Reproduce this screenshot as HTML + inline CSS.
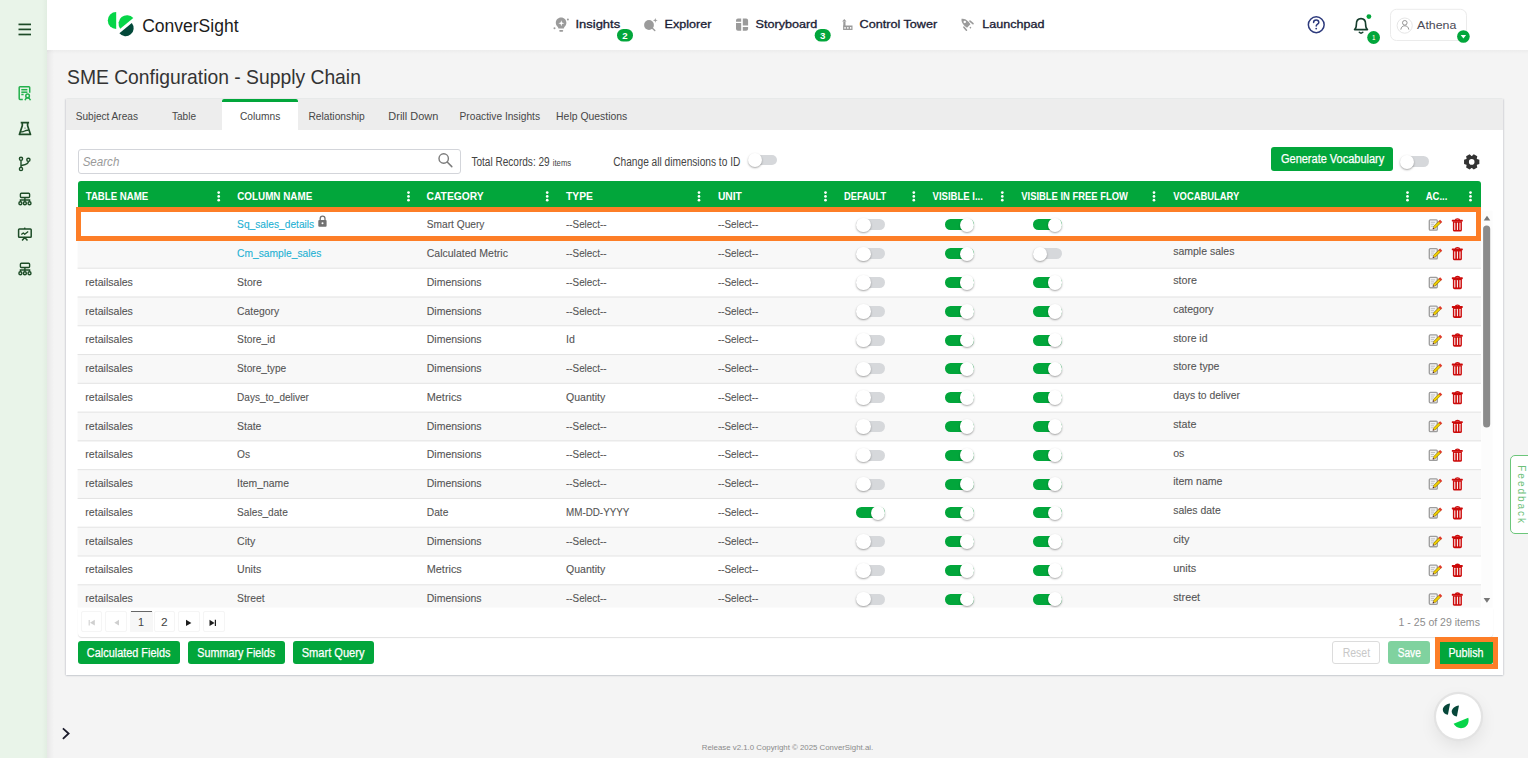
<!DOCTYPE html>
<html><head><meta charset="utf-8"><style>
html,body{margin:0;padding:0;}
body{width:1528px;height:758px;overflow:hidden;position:relative;background:#f4f4f4;font-family:"Liberation Sans",sans-serif;}
#L>div{position:absolute;}
#A>div{position:absolute;}
svg.ov{position:absolute;left:0;top:0;}
svg.ov text{font-family:"Liberation Sans",sans-serif;}
</style></head><body>
<div id="L">
<div style="left:0px;top:0px;width:46.6px;height:758px;background:linear-gradient(to right,#e9f4e9 0,#e9f4e9 42px,#e2eee2 46.6px)"></div>
<div style="left:46.6px;top:49.5px;width:7px;height:708.5px;background:linear-gradient(to right,rgba(0,0,0,0.05),rgba(0,0,0,0))"></div>
<div style="left:46.6px;top:0px;width:1481.4px;height:49.5px;background:#fff"></div>
<div style="left:46.6px;top:49.5px;width:1481.4px;height:4px;background:linear-gradient(to bottom,rgba(0,0,0,0.03),rgba(0,0,0,0))"></div>
<div style="left:66.3px;top:99px;width:1436.7px;height:576.3px;background:#fff;box-shadow:0 1px 1.5px rgba(30,40,70,0.16), 1px 0 1.5px rgba(30,40,70,0.10), -1px 0 1.5px rgba(30,40,70,0.10)"></div>
<div style="left:66.3px;top:99px;width:1436.7px;height:30.8px;background:#ededed"></div>
<div style="left:222px;top:99px;width:76px;height:30.8px;background:#fff"></div>
<div style="left:222px;top:99px;width:76px;height:3px;background:#02a63b;border-radius:2px 2px 0 0"></div>
<div style="left:78px;top:148.7px;width:383px;height:25.3px;background:#fff;border:1px solid #d3d5da;border-radius:3px;box-sizing:border-box"></div>
<div style="left:1271px;top:147px;width:122px;height:24px;background:#02a63b;border-radius:3px"></div>
<div style="left:77.6px;top:180.5px;width:1403.4px;height:30.1px;background:#02a63b;border-radius:3px 3px 0 0"></div>
<svg style="position:absolute;left:0;top:0" width="1528" height="758"><rect x="77.6" y="210.64" width="1403.4" height="28.78" fill="#ffffff"/><rect x="77.6" y="239.42" width="1403.4" height="28.78" fill="#f8f8f8"/><rect x="77.6" y="268.20" width="1403.4" height="28.78" fill="#ffffff"/><rect x="77.6" y="296.98" width="1403.4" height="28.78" fill="#f8f8f8"/><rect x="77.6" y="325.76" width="1403.4" height="28.78" fill="#ffffff"/><rect x="77.6" y="354.54" width="1403.4" height="28.78" fill="#f8f8f8"/><rect x="77.6" y="383.32" width="1403.4" height="28.78" fill="#ffffff"/><rect x="77.6" y="412.10" width="1403.4" height="28.78" fill="#f8f8f8"/><rect x="77.6" y="440.88" width="1403.4" height="28.78" fill="#ffffff"/><rect x="77.6" y="469.66" width="1403.4" height="28.78" fill="#f8f8f8"/><rect x="77.6" y="498.44" width="1403.4" height="28.78" fill="#ffffff"/><rect x="77.6" y="527.22" width="1403.4" height="28.78" fill="#f8f8f8"/><rect x="77.6" y="556.00" width="1403.4" height="28.78" fill="#ffffff"/><rect x="77.6" y="584.78" width="1403.4" height="22.82" fill="#f8f8f8"/><rect x="77.6" y="238.92" width="1403.4" height="1" fill="#e3e3e3"/><rect x="77.6" y="267.70" width="1403.4" height="1" fill="#e3e3e3"/><rect x="77.6" y="296.48" width="1403.4" height="1" fill="#e3e3e3"/><rect x="77.6" y="325.26" width="1403.4" height="1" fill="#e3e3e3"/><rect x="77.6" y="354.04" width="1403.4" height="1" fill="#e3e3e3"/><rect x="77.6" y="382.82" width="1403.4" height="1" fill="#e3e3e3"/><rect x="77.6" y="411.60" width="1403.4" height="1" fill="#e3e3e3"/><rect x="77.6" y="440.38" width="1403.4" height="1" fill="#e3e3e3"/><rect x="77.6" y="469.16" width="1403.4" height="1" fill="#e3e3e3"/><rect x="77.6" y="497.94" width="1403.4" height="1" fill="#e3e3e3"/><rect x="77.6" y="526.72" width="1403.4" height="1" fill="#e3e3e3"/><rect x="77.6" y="555.50" width="1403.4" height="1" fill="#e3e3e3"/><rect x="77.6" y="584.28" width="1403.4" height="1" fill="#e3e3e3"/></svg>
<div style="left:856.2px;top:219.49px;width:28.5px;height:11px;background:#d6d8db;border-radius:6px"></div>
<div style="left:856.2px;top:217.79000000000002px;width:14.4px;height:14.4px;background:#fff;border-radius:50%;box-shadow:0 1px 2px rgba(0,0,0,0.35)"></div>
<div style="left:945.2px;top:219.49px;width:28.5px;height:11px;background:#02a63b;border-radius:6px"></div>
<div style="left:959.7px;top:217.79000000000002px;width:14.4px;height:14.4px;background:#fff;border-radius:50%;box-shadow:0 1px 2px rgba(0,0,0,0.35)"></div>
<div style="left:1033px;top:219.49px;width:28.5px;height:11px;background:#02a63b;border-radius:6px"></div>
<div style="left:1047.5px;top:217.79000000000002px;width:14.4px;height:14.4px;background:#fff;border-radius:50%;box-shadow:0 1px 2px rgba(0,0,0,0.35)"></div>
<div style="left:856.2px;top:248.26999999999998px;width:28.5px;height:11px;background:#d6d8db;border-radius:6px"></div>
<div style="left:856.2px;top:246.57px;width:14.4px;height:14.4px;background:#fff;border-radius:50%;box-shadow:0 1px 2px rgba(0,0,0,0.35)"></div>
<div style="left:945.2px;top:248.26999999999998px;width:28.5px;height:11px;background:#02a63b;border-radius:6px"></div>
<div style="left:959.7px;top:246.57px;width:14.4px;height:14.4px;background:#fff;border-radius:50%;box-shadow:0 1px 2px rgba(0,0,0,0.35)"></div>
<div style="left:1033px;top:248.26999999999998px;width:28.5px;height:11px;background:#d6d8db;border-radius:6px"></div>
<div style="left:1033px;top:246.57px;width:14.4px;height:14.4px;background:#fff;border-radius:50%;box-shadow:0 1px 2px rgba(0,0,0,0.35)"></div>
<div style="left:856.2px;top:277.04999999999995px;width:28.5px;height:11px;background:#d6d8db;border-radius:6px"></div>
<div style="left:856.2px;top:275.34999999999997px;width:14.4px;height:14.4px;background:#fff;border-radius:50%;box-shadow:0 1px 2px rgba(0,0,0,0.35)"></div>
<div style="left:945.2px;top:277.04999999999995px;width:28.5px;height:11px;background:#02a63b;border-radius:6px"></div>
<div style="left:959.7px;top:275.34999999999997px;width:14.4px;height:14.4px;background:#fff;border-radius:50%;box-shadow:0 1px 2px rgba(0,0,0,0.35)"></div>
<div style="left:1033px;top:277.04999999999995px;width:28.5px;height:11px;background:#02a63b;border-radius:6px"></div>
<div style="left:1047.5px;top:275.34999999999997px;width:14.4px;height:14.4px;background:#fff;border-radius:50%;box-shadow:0 1px 2px rgba(0,0,0,0.35)"></div>
<div style="left:856.2px;top:305.83px;width:28.5px;height:11px;background:#d6d8db;border-radius:6px"></div>
<div style="left:856.2px;top:304.13px;width:14.4px;height:14.4px;background:#fff;border-radius:50%;box-shadow:0 1px 2px rgba(0,0,0,0.35)"></div>
<div style="left:945.2px;top:305.83px;width:28.5px;height:11px;background:#02a63b;border-radius:6px"></div>
<div style="left:959.7px;top:304.13px;width:14.4px;height:14.4px;background:#fff;border-radius:50%;box-shadow:0 1px 2px rgba(0,0,0,0.35)"></div>
<div style="left:1033px;top:305.83px;width:28.5px;height:11px;background:#02a63b;border-radius:6px"></div>
<div style="left:1047.5px;top:304.13px;width:14.4px;height:14.4px;background:#fff;border-radius:50%;box-shadow:0 1px 2px rgba(0,0,0,0.35)"></div>
<div style="left:856.2px;top:334.61px;width:28.5px;height:11px;background:#d6d8db;border-radius:6px"></div>
<div style="left:856.2px;top:332.91px;width:14.4px;height:14.4px;background:#fff;border-radius:50%;box-shadow:0 1px 2px rgba(0,0,0,0.35)"></div>
<div style="left:945.2px;top:334.61px;width:28.5px;height:11px;background:#02a63b;border-radius:6px"></div>
<div style="left:959.7px;top:332.91px;width:14.4px;height:14.4px;background:#fff;border-radius:50%;box-shadow:0 1px 2px rgba(0,0,0,0.35)"></div>
<div style="left:1033px;top:334.61px;width:28.5px;height:11px;background:#02a63b;border-radius:6px"></div>
<div style="left:1047.5px;top:332.91px;width:14.4px;height:14.4px;background:#fff;border-radius:50%;box-shadow:0 1px 2px rgba(0,0,0,0.35)"></div>
<div style="left:856.2px;top:363.39px;width:28.5px;height:11px;background:#d6d8db;border-radius:6px"></div>
<div style="left:856.2px;top:361.69px;width:14.4px;height:14.4px;background:#fff;border-radius:50%;box-shadow:0 1px 2px rgba(0,0,0,0.35)"></div>
<div style="left:945.2px;top:363.39px;width:28.5px;height:11px;background:#02a63b;border-radius:6px"></div>
<div style="left:959.7px;top:361.69px;width:14.4px;height:14.4px;background:#fff;border-radius:50%;box-shadow:0 1px 2px rgba(0,0,0,0.35)"></div>
<div style="left:1033px;top:363.39px;width:28.5px;height:11px;background:#02a63b;border-radius:6px"></div>
<div style="left:1047.5px;top:361.69px;width:14.4px;height:14.4px;background:#fff;border-radius:50%;box-shadow:0 1px 2px rgba(0,0,0,0.35)"></div>
<div style="left:856.2px;top:392.16999999999996px;width:28.5px;height:11px;background:#d6d8db;border-radius:6px"></div>
<div style="left:856.2px;top:390.46999999999997px;width:14.4px;height:14.4px;background:#fff;border-radius:50%;box-shadow:0 1px 2px rgba(0,0,0,0.35)"></div>
<div style="left:945.2px;top:392.16999999999996px;width:28.5px;height:11px;background:#02a63b;border-radius:6px"></div>
<div style="left:959.7px;top:390.46999999999997px;width:14.4px;height:14.4px;background:#fff;border-radius:50%;box-shadow:0 1px 2px rgba(0,0,0,0.35)"></div>
<div style="left:1033px;top:392.16999999999996px;width:28.5px;height:11px;background:#02a63b;border-radius:6px"></div>
<div style="left:1047.5px;top:390.46999999999997px;width:14.4px;height:14.4px;background:#fff;border-radius:50%;box-shadow:0 1px 2px rgba(0,0,0,0.35)"></div>
<div style="left:856.2px;top:420.95px;width:28.5px;height:11px;background:#d6d8db;border-radius:6px"></div>
<div style="left:856.2px;top:419.25px;width:14.4px;height:14.4px;background:#fff;border-radius:50%;box-shadow:0 1px 2px rgba(0,0,0,0.35)"></div>
<div style="left:945.2px;top:420.95px;width:28.5px;height:11px;background:#02a63b;border-radius:6px"></div>
<div style="left:959.7px;top:419.25px;width:14.4px;height:14.4px;background:#fff;border-radius:50%;box-shadow:0 1px 2px rgba(0,0,0,0.35)"></div>
<div style="left:1033px;top:420.95px;width:28.5px;height:11px;background:#02a63b;border-radius:6px"></div>
<div style="left:1047.5px;top:419.25px;width:14.4px;height:14.4px;background:#fff;border-radius:50%;box-shadow:0 1px 2px rgba(0,0,0,0.35)"></div>
<div style="left:856.2px;top:449.73px;width:28.5px;height:11px;background:#d6d8db;border-radius:6px"></div>
<div style="left:856.2px;top:448.03000000000003px;width:14.4px;height:14.4px;background:#fff;border-radius:50%;box-shadow:0 1px 2px rgba(0,0,0,0.35)"></div>
<div style="left:945.2px;top:449.73px;width:28.5px;height:11px;background:#02a63b;border-radius:6px"></div>
<div style="left:959.7px;top:448.03000000000003px;width:14.4px;height:14.4px;background:#fff;border-radius:50%;box-shadow:0 1px 2px rgba(0,0,0,0.35)"></div>
<div style="left:1033px;top:449.73px;width:28.5px;height:11px;background:#02a63b;border-radius:6px"></div>
<div style="left:1047.5px;top:448.03000000000003px;width:14.4px;height:14.4px;background:#fff;border-radius:50%;box-shadow:0 1px 2px rgba(0,0,0,0.35)"></div>
<div style="left:856.2px;top:478.51px;width:28.5px;height:11px;background:#d6d8db;border-radius:6px"></div>
<div style="left:856.2px;top:476.81px;width:14.4px;height:14.4px;background:#fff;border-radius:50%;box-shadow:0 1px 2px rgba(0,0,0,0.35)"></div>
<div style="left:945.2px;top:478.51px;width:28.5px;height:11px;background:#02a63b;border-radius:6px"></div>
<div style="left:959.7px;top:476.81px;width:14.4px;height:14.4px;background:#fff;border-radius:50%;box-shadow:0 1px 2px rgba(0,0,0,0.35)"></div>
<div style="left:1033px;top:478.51px;width:28.5px;height:11px;background:#02a63b;border-radius:6px"></div>
<div style="left:1047.5px;top:476.81px;width:14.4px;height:14.4px;background:#fff;border-radius:50%;box-shadow:0 1px 2px rgba(0,0,0,0.35)"></div>
<div style="left:856.2px;top:507.28999999999996px;width:28.5px;height:11px;background:#02a63b;border-radius:6px"></div>
<div style="left:870.7px;top:505.59px;width:14.4px;height:14.4px;background:#fff;border-radius:50%;box-shadow:0 1px 2px rgba(0,0,0,0.35)"></div>
<div style="left:945.2px;top:507.28999999999996px;width:28.5px;height:11px;background:#02a63b;border-radius:6px"></div>
<div style="left:959.7px;top:505.59px;width:14.4px;height:14.4px;background:#fff;border-radius:50%;box-shadow:0 1px 2px rgba(0,0,0,0.35)"></div>
<div style="left:1033px;top:507.28999999999996px;width:28.5px;height:11px;background:#02a63b;border-radius:6px"></div>
<div style="left:1047.5px;top:505.59px;width:14.4px;height:14.4px;background:#fff;border-radius:50%;box-shadow:0 1px 2px rgba(0,0,0,0.35)"></div>
<div style="left:856.2px;top:536.07px;width:28.5px;height:11px;background:#d6d8db;border-radius:6px"></div>
<div style="left:856.2px;top:534.37px;width:14.4px;height:14.4px;background:#fff;border-radius:50%;box-shadow:0 1px 2px rgba(0,0,0,0.35)"></div>
<div style="left:945.2px;top:536.07px;width:28.5px;height:11px;background:#02a63b;border-radius:6px"></div>
<div style="left:959.7px;top:534.37px;width:14.4px;height:14.4px;background:#fff;border-radius:50%;box-shadow:0 1px 2px rgba(0,0,0,0.35)"></div>
<div style="left:1033px;top:536.07px;width:28.5px;height:11px;background:#02a63b;border-radius:6px"></div>
<div style="left:1047.5px;top:534.37px;width:14.4px;height:14.4px;background:#fff;border-radius:50%;box-shadow:0 1px 2px rgba(0,0,0,0.35)"></div>
<div style="left:856.2px;top:564.85px;width:28.5px;height:11px;background:#d6d8db;border-radius:6px"></div>
<div style="left:856.2px;top:563.15px;width:14.4px;height:14.4px;background:#fff;border-radius:50%;box-shadow:0 1px 2px rgba(0,0,0,0.35)"></div>
<div style="left:945.2px;top:564.85px;width:28.5px;height:11px;background:#02a63b;border-radius:6px"></div>
<div style="left:959.7px;top:563.15px;width:14.4px;height:14.4px;background:#fff;border-radius:50%;box-shadow:0 1px 2px rgba(0,0,0,0.35)"></div>
<div style="left:1033px;top:564.85px;width:28.5px;height:11px;background:#02a63b;border-radius:6px"></div>
<div style="left:1047.5px;top:563.15px;width:14.4px;height:14.4px;background:#fff;border-radius:50%;box-shadow:0 1px 2px rgba(0,0,0,0.35)"></div>
<div style="left:856.2px;top:593.63px;width:28.5px;height:11px;background:#d6d8db;border-radius:6px"></div>
<div style="left:856.2px;top:591.93px;width:14.4px;height:14.4px;background:#fff;border-radius:50%;box-shadow:0 1px 2px rgba(0,0,0,0.35)"></div>
<div style="left:945.2px;top:593.63px;width:28.5px;height:11px;background:#02a63b;border-radius:6px"></div>
<div style="left:959.7px;top:591.93px;width:14.4px;height:14.4px;background:#fff;border-radius:50%;box-shadow:0 1px 2px rgba(0,0,0,0.35)"></div>
<div style="left:1033px;top:593.63px;width:28.5px;height:11px;background:#02a63b;border-radius:6px"></div>
<div style="left:1047.5px;top:591.93px;width:14.4px;height:14.4px;background:#fff;border-radius:50%;box-shadow:0 1px 2px rgba(0,0,0,0.35)"></div>
<div style="left:77.6px;top:607.5px;width:1415px;height:29.2px;background:#fff;border-radius:0 0 4px 4px;box-shadow:0 1px 1px rgba(0,0,0,0.12)"></div>
<div style="left:77.6px;top:640.6px;width:102.4px;height:23.8px;background:#02a63b;border-radius:3px"></div>
<div style="left:188px;top:640.6px;width:96.69999999999999px;height:23.8px;background:#02a63b;border-radius:3px"></div>
<div style="left:293px;top:640.6px;width:81px;height:23.8px;background:#02a63b;border-radius:3px"></div>
<div style="left:1332.4px;top:640.6px;width:47.3px;height:23.6px;border:1px solid #dcdcdc;border-radius:3px;box-sizing:border-box;background:#fff"></div>
<div style="left:1388.2px;top:640.6px;width:42.2px;height:23.6px;background:#80d29f;border-radius:3px"></div>
<div style="left:1440px;top:642px;width:53px;height:21.8px;background:#02a63b;border-radius:0 0 2px 0"></div>
<div style="left:749.4px;top:154.8px;width:28px;height:10.4px;background:#d6d8db;border-radius:6px"></div>
<div style="left:748.4px;top:153px;width:14px;height:14px;background:#fff;border-radius:50%;box-shadow:0 1px 2px rgba(0,0,0,0.35)"></div>
<div style="left:1401.4px;top:156.3px;width:28px;height:10.4px;background:#d6d8db;border-radius:6px"></div>
<div style="left:1400.4px;top:154.5px;width:14px;height:14px;background:#fff;border-radius:50%;box-shadow:0 1px 2px rgba(0,0,0,0.35)"></div>
<div style="left:81.4px;top:611.4px;width:21.099999999999994px;height:21.1px;border:1px solid #f5f5f5;box-sizing:border-box;border-radius:2px"></div>
<div style="left:105.3px;top:611.4px;width:21.299999999999997px;height:21.1px;border:1px solid #f5f5f5;box-sizing:border-box;border-radius:2px"></div>
<div style="left:130px;top:611.4px;width:22.599999999999994px;height:21.1px;border:1px solid #f5f5f5;box-sizing:border-box;border-radius:2px"></div>
<div style="left:153.6px;top:611.4px;width:21.599999999999994px;height:21.1px;border:1px solid #f5f5f5;box-sizing:border-box;border-radius:2px"></div>
<div style="left:178.1px;top:611.4px;width:22.099999999999994px;height:21.1px;border:1px solid #f5f5f5;box-sizing:border-box;border-radius:2px"></div>
<div style="left:202.6px;top:611.4px;width:22.099999999999994px;height:21.1px;border:1px solid #f5f5f5;box-sizing:border-box;border-radius:2px"></div>
<div style="left:130px;top:611.4px;width:22.6px;height:21.1px;background:#f7f7f7"></div>
<div style="left:131px;top:611px;width:21.3px;height:1.2px;background:#666"></div>
<div style="left:1510.4px;top:454.8px;width:30px;height:79.3px;border:1.5px solid #6cc67a;border-radius:5px;box-sizing:border-box;background:#fff"></div>
<div style="left:1435.5px;top:693.5px;width:45px;height:45px;border-radius:50%;background:#fff;box-shadow:0 0 0 2.2px #e3e3e3, 0 6px 18px rgba(0,0,0,0.09)"></div>
</div>
<svg class="ov" width="1528" height="758" viewBox="0 0 1528 758">
<circle cx="218.70" cy="192.6" r="1.35" fill="#fff"/>
<circle cx="218.70" cy="196.4" r="1.35" fill="#fff"/>
<circle cx="218.70" cy="200.2" r="1.35" fill="#fff"/>
<circle cx="408.50" cy="192.6" r="1.35" fill="#fff"/>
<circle cx="408.50" cy="196.4" r="1.35" fill="#fff"/>
<circle cx="408.50" cy="200.2" r="1.35" fill="#fff"/>
<circle cx="547.20" cy="192.6" r="1.35" fill="#fff"/>
<circle cx="547.20" cy="196.4" r="1.35" fill="#fff"/>
<circle cx="547.20" cy="200.2" r="1.35" fill="#fff"/>
<circle cx="699.00" cy="192.6" r="1.35" fill="#fff"/>
<circle cx="699.00" cy="196.4" r="1.35" fill="#fff"/>
<circle cx="699.00" cy="200.2" r="1.35" fill="#fff"/>
<circle cx="825.50" cy="192.6" r="1.35" fill="#fff"/>
<circle cx="825.50" cy="196.4" r="1.35" fill="#fff"/>
<circle cx="825.50" cy="200.2" r="1.35" fill="#fff"/>
<circle cx="913.80" cy="192.6" r="1.35" fill="#fff"/>
<circle cx="913.80" cy="196.4" r="1.35" fill="#fff"/>
<circle cx="913.80" cy="200.2" r="1.35" fill="#fff"/>
<circle cx="1002.30" cy="192.6" r="1.35" fill="#fff"/>
<circle cx="1002.30" cy="196.4" r="1.35" fill="#fff"/>
<circle cx="1002.30" cy="200.2" r="1.35" fill="#fff"/>
<circle cx="1154.00" cy="192.6" r="1.35" fill="#fff"/>
<circle cx="1154.00" cy="196.4" r="1.35" fill="#fff"/>
<circle cx="1154.00" cy="200.2" r="1.35" fill="#fff"/>
<circle cx="1407.50" cy="192.6" r="1.35" fill="#fff"/>
<circle cx="1407.50" cy="196.4" r="1.35" fill="#fff"/>
<circle cx="1407.50" cy="200.2" r="1.35" fill="#fff"/>
<circle cx="1470.50" cy="192.6" r="1.35" fill="#fff"/>
<circle cx="1470.50" cy="196.4" r="1.35" fill="#fff"/>
<circle cx="1470.50" cy="200.2" r="1.35" fill="#fff"/>
<g stroke="#1e4a28" stroke-width="1.7" stroke-linecap="butt"><line x1="18.5" y1="24.4" x2="31" y2="24.4"/><line x1="18.5" y1="29.4" x2="31" y2="29.4"/><line x1="18.5" y1="34.5" x2="31" y2="34.5"/></g>
<path d="M116.2,12 A8.45,8.45 0 0 0 116.2,28.9 Z" fill="#06d548"/>
<path d="M133.3,17.9 A8.5,8.5 0 0 0 120.2,28.7 Z" fill="#06d548"/>
<path d="M131.8,23 A8.05,8.05 0 0 1 119.4,33.3 Z" fill="#03493a"/>
<path d="M561.1,17.6 C564.2,17.6 566.4,19.9 566.4,22.8 C566.4,24.6 565.6,25.8 564.6,26.8 C564,27.4 563.8,28 563.8,28.6 L558.4,28.6 C558.4,28 558.2,27.4 557.6,26.8 C556.6,25.8 555.8,24.6 555.8,22.8 C555.8,19.9 558,17.6 561.1,17.6 Z" fill="#9b9b9b"/>
<path d="M561.3,20.3 L562,22.6 L564.3,23.3 L562,24 L561.3,26.3 L560.6,24 L558.3,23.3 L560.6,22.6 Z" fill="#fff"/>
<rect x="559.2" y="29.9" width="4" height="1.8" rx="0.9" fill="#9b9b9b"/><circle cx="567.9" cy="19.5" r="1" fill="#9b9b9b"/><circle cx="554.5" cy="28.2" r="1" fill="#9b9b9b"/>
<circle cx="649" cy="25" r="4.9" fill="#9b9b9b"/><line x1="652.4" y1="28.3" x2="654.8" y2="30.6" stroke="#9b9b9b" stroke-width="1.4" stroke-linecap="round"/>
<path d="M655.3,17.9 L655.9,19.7 L657.7,20.3 L655.9,20.9 L655.3,22.7 L654.7,20.9 L652.9,20.3 L654.7,19.7 Z" fill="#9b9b9b"/>
<path d="M738,18.4 H741.2 V21.8 H736 V20.4 A2,2 0 0 1 738,18.4 Z M736,23.1 H741.2 V30.8 H738 A2,2 0 0 1 736,28.8 Z M742.8,18.4 H746.1 A2,2 0 0 1 748.1,20.4 V25.6 H742.8 Z M742.8,27 H748.1 V28.8 A2,2 0 0 1 746.1,30.8 H742.8 Z" fill="#9b9b9b"/>
<path d="M844.3,19 L846.5,21.6 L842.1,21.6 Z" fill="#9b9b9b"/><rect x="843.3" y="21.5" width="2.2" height="5" fill="#9b9b9b"/>
<path d="M843.1,25.6 H852.5 V30.1 H843.1 Z M844.4,27 V28.7 H845.7 V27 Z M847.2,27 V28.7 H848.5 V27 Z M850,27 V28.7 H851.3 V27 Z" fill="#9b9b9b" fill-rule="evenodd"/>
<g transform="translate(965.9,23.1) rotate(-45)"><path d="M0,-6.2 C2.2,-4.6 3,-2 2.9,1.2 L2.4,4 L-2.4,4 L-2.9,1.2 C-3,-2 -2.2,-4.6 0,-6.2 Z M-1.25,-1.6 a1.25,1.25 0 1 0 2.5,0 a1.25,1.25 0 1 0 -2.5,0 Z" fill="#9b9b9b" fill-rule="evenodd"/><path d="M4.3,1.5 L4.6,5.4" stroke="#9b9b9b" stroke-width="1.6" stroke-linecap="round"/><path d="M-4.3,1.5 L-4.6,5.4" stroke="#9b9b9b" stroke-width="1.6" stroke-linecap="round"/><circle cx="0" cy="6.4" r="0.8" fill="#9b9b9b"/></g>
<rect x="617" y="29" width="16" height="12.6" rx="6.3" fill="#02a63b"/><rect x="814.7" y="29" width="16" height="12.6" rx="6.3" fill="#02a63b"/>
<circle cx="1316.25" cy="24.75" r="7.9" fill="none" stroke="#2d3a7c" stroke-width="1.5"/>
<path d="M1313.6,22.6 C1313.6,20.9 1314.8,20.1 1316.2,20.1 C1317.7,20.1 1318.8,21 1318.8,22.4 C1318.8,24 1316.2,24.1 1316.2,25.9" fill="none" stroke="#2d3a7c" stroke-width="1.5" stroke-linecap="round"/><circle cx="1316.2" cy="28.6" r="0.9" fill="#2d3a7c"/>
<path d="M1354.5,29.6 C1356,28.6 1356.4,26.5 1356.4,24 C1356.4,20.4 1358.5,18.6 1361,18.6 C1363.5,18.6 1365.6,20.4 1365.6,24 C1365.6,26.5 1366,28.6 1367.5,29.6 Z" fill="none" stroke="#163e2d" stroke-width="1.6" stroke-linejoin="round"/>
<path d="M1359.3,32.3 Q1361,34 1362.8,32.3" fill="none" stroke="#163e2d" stroke-width="1.5" stroke-linecap="round"/>
<circle cx="1368.9" cy="16.6" r="2.4" fill="#02a63b"/><circle cx="1373.6" cy="37.5" r="6.4" fill="#02a63b"/>
<rect x="1390.5" y="9.3" width="76" height="31.2" rx="6" fill="none" stroke="#ebebeb" stroke-width="1"/>
<circle cx="1404.7" cy="25.6" r="7.6" fill="#fff" stroke="#e2e2e2" stroke-width="0.9"/>
<circle cx="1404.8" cy="22.8" r="2.3" fill="none" stroke="#8a8a8a" stroke-width="0.9"/><path d="M1400.8,29.6 C1401.2,26.9 1402.8,25.8 1404.8,25.8 C1406.8,25.8 1408.4,26.9 1408.8,29.6" fill="none" stroke="#8a8a8a" stroke-width="0.9"/>
<circle cx="1463.4" cy="36.5" r="6.3" fill="#02a63b"/><path d="M1460.7,34.9 H1466.1 L1463.4,38.4 Z" fill="#fff"/>
<g fill="none" stroke="#22b04b" stroke-width="1.5"><path d="M22.8,99.4 H20 A0.8,0.8 0 0 1 19.2,98.6 V87.6 A0.8,0.8 0 0 1 20,86.8 H28.9 A0.8,0.8 0 0 1 29.7,87.6 V92.8"/><line x1="21.3" y1="89.7" x2="27.4" y2="89.7"/><line x1="21.3" y1="92.2" x2="27.4" y2="92.2"/><line x1="21.3" y1="94.5" x2="23.6" y2="94.5"/><circle cx="27.6" cy="95.9" r="1.8"/><path d="M25,100.2 C25.5,98.6 26.4,97.8 27.6,97.8 C28.8,97.8 29.8,98.6 30.5,100.2"/></g>
<g fill="none" stroke="#1d4c27" stroke-width="1.5" stroke-linejoin="round"><path d="M20.7,122.6 H29.1 M22.3,122.6 V125.8 L19.4,134.4 H30.5 L27.6,125.8 V122.6" stroke-width="1.7"/><path d="M20.4,131.5 C22.5,132.8 24.2,131.2 25.5,130.6 C26.8,130 27.8,130.4 28.6,130.2" stroke-width="1.3"/></g><circle cx="25" cy="128" r="0.6" fill="#1d4c27"/>
<g fill="none" stroke="#1d4c27" stroke-width="1.4"><circle cx="21" cy="158.8" r="1.6"/><circle cx="21" cy="169" r="1.6"/><circle cx="28.4" cy="159.8" r="1.6"/><line x1="21" y1="160.4" x2="21" y2="167.4"/><path d="M28.4,161.4 C28.4,164.2 25,164.6 21,165.6"/></g>
<g fill="none" stroke="#1d4c27" stroke-width="1.4"><rect x="20.4" y="193.3" width="9.2" height="4.2" rx="1"/><line x1="24.9" y1="197.5" x2="24.9" y2="201.5"/><path d="M20.4,201.6 V200 H29.6 V201.6"/><circle cx="20.4" cy="203.3" r="1.5"/><circle cx="24.9" cy="203.3" r="1.5"/><circle cx="29.5" cy="203.3" r="1.5"/></g>
<g fill="none" stroke="#1d4c27" stroke-width="1.4"><rect x="20.4" y="263.3" width="9.2" height="4.2" rx="1"/><line x1="24.9" y1="267.5" x2="24.9" y2="271.5"/><path d="M20.4,271.6 V270 H29.6 V271.6"/><circle cx="20.4" cy="273.3" r="1.5"/><circle cx="24.9" cy="273.3" r="1.5"/><circle cx="29.5" cy="273.3" r="1.5"/></g>
<g fill="none" stroke="#1d4c27" stroke-width="1.5" stroke-linejoin="round"><rect x="18.6" y="229" width="12.6" height="8.3" rx="0.8"/><line x1="24.7" y1="227.6" x2="24.7" y2="229"/><path d="M22.1,240.6 L24.7,237.6 L27.5,240.6"/><path d="M21.3,234.6 L23.3,232.9 L24.7,234.3 L28.2,231.4" stroke-width="1.3"/></g>
<path d="M62.9,728.3 L68.6,733.5 L62.9,738.8" fill="none" stroke="#1b1b2b" stroke-width="1.8"/>
<circle cx="443.7" cy="158.5" r="4.7" fill="none" stroke="#7b7b7b" stroke-width="1.4"/><line x1="447.2" y1="162" x2="451.8" y2="166.6" stroke="#7b7b7b" stroke-width="1.5" stroke-linecap="round"/>
<path d="M1477.01,159.10 L1479.33,159.87 L1479.33,163.93 L1477.01,164.70 L1476.78,165.10 L1477.28,167.50 L1473.76,169.53 L1471.93,167.90 L1471.47,167.90 L1469.64,169.53 L1466.12,167.50 L1466.62,165.10 L1466.39,164.70 L1464.07,163.93 L1464.07,159.87 L1466.39,159.10 L1466.62,158.70 L1466.12,156.30 L1469.64,154.27 L1471.47,155.90 L1471.93,155.90 L1473.76,154.27 L1477.28,156.30 L1476.78,158.70 Z M1474.5,161.9 A2.8,2.8 0 1 0 1468.9,161.9 A2.8,2.8 0 1 0 1474.5,161.9 Z" fill="#333" fill-rule="evenodd"/>
<path d="M320.2,220 V218.6 A2.4,2.4 0 0 1 325,218.6 V220" fill="none" stroke="#727272" stroke-width="1.3"/><rect x="318.3" y="219.9" width="8.3" height="6.9" rx="1" fill="#727272"/><circle cx="322.5" cy="223.3" r="1" fill="#fff"/>
<rect x="1481.5" y="210.6" width="11" height="397" fill="#fcfcfc"/>
<path d="M1483.7,220.5 L1487,215.8 L1490.3,220.5 Z" fill="#777"/><rect x="1483.1" y="225.5" width="7.1" height="202" rx="3.55" fill="#8b8b8b"/><path d="M1483.6,597.9 L1490.2,597.9 L1486.9,602.8 Z" fill="#777"/>
<g transform="translate(0,-0.01)"><rect x="1429.3" y="219.8" width="8" height="10.4" rx="1" fill="#f2f2f2" stroke="#9d9d9d" stroke-width="1.3"/><line x1="1430.8" y1="222.3" x2="1435" y2="222.3" stroke="#b5b5b5" stroke-width="0.8"/><line x1="1430.8" y1="224.3" x2="1434" y2="224.3" stroke="#b5b5b5" stroke-width="0.8"/><line x1="1430.8" y1="226.3" x2="1433" y2="226.3" stroke="#b5b5b5" stroke-width="0.8"/><line x1="1434" y1="227.8" x2="1440.3" y2="221.6" stroke="#8a7a20" stroke-width="3"/><line x1="1434" y1="227.8" x2="1440.3" y2="221.6" stroke="#f2cf00" stroke-width="2"/><line x1="1439.6" y1="222.3" x2="1441.2" y2="220.8" stroke="#e03a2a" stroke-width="3"/><path d="M1432.6,229.3 L1433,227.2 L1434.7,228.9 Z" fill="#5a2a20"/><path d="M1455.4,220.3 C1455.5,218.4 1459.5,218.4 1459.6,220.3" fill="none" stroke="#cc0a0a" stroke-width="1.3"/><rect x="1451.8" y="219.7" width="11" height="1.9" rx="0.6" fill="#cc0a0a"/><path d="M1452.9,221.3 H1461.9 V230 A1.6,1.6 0 0 1 1460.3,231.6 H1454.5 A1.6,1.6 0 0 1 1452.9,230 Z" fill="#cc0a0a"/><rect x="1454.3" y="222.4" width="1" height="7.6" rx="0.5" fill="#fff"/><rect x="1456.9" y="222.4" width="1" height="7.6" rx="0.5" fill="#fff"/><rect x="1459.5" y="222.4" width="1" height="7.6" rx="0.5" fill="#fff"/></g>
<g transform="translate(0,28.77)"><rect x="1429.3" y="219.8" width="8" height="10.4" rx="1" fill="#f2f2f2" stroke="#9d9d9d" stroke-width="1.3"/><line x1="1430.8" y1="222.3" x2="1435" y2="222.3" stroke="#b5b5b5" stroke-width="0.8"/><line x1="1430.8" y1="224.3" x2="1434" y2="224.3" stroke="#b5b5b5" stroke-width="0.8"/><line x1="1430.8" y1="226.3" x2="1433" y2="226.3" stroke="#b5b5b5" stroke-width="0.8"/><line x1="1434" y1="227.8" x2="1440.3" y2="221.6" stroke="#8a7a20" stroke-width="3"/><line x1="1434" y1="227.8" x2="1440.3" y2="221.6" stroke="#f2cf00" stroke-width="2"/><line x1="1439.6" y1="222.3" x2="1441.2" y2="220.8" stroke="#e03a2a" stroke-width="3"/><path d="M1432.6,229.3 L1433,227.2 L1434.7,228.9 Z" fill="#5a2a20"/><path d="M1455.4,220.3 C1455.5,218.4 1459.5,218.4 1459.6,220.3" fill="none" stroke="#cc0a0a" stroke-width="1.3"/><rect x="1451.8" y="219.7" width="11" height="1.9" rx="0.6" fill="#cc0a0a"/><path d="M1452.9,221.3 H1461.9 V230 A1.6,1.6 0 0 1 1460.3,231.6 H1454.5 A1.6,1.6 0 0 1 1452.9,230 Z" fill="#cc0a0a"/><rect x="1454.3" y="222.4" width="1" height="7.6" rx="0.5" fill="#fff"/><rect x="1456.9" y="222.4" width="1" height="7.6" rx="0.5" fill="#fff"/><rect x="1459.5" y="222.4" width="1" height="7.6" rx="0.5" fill="#fff"/></g>
<g transform="translate(0,57.55)"><rect x="1429.3" y="219.8" width="8" height="10.4" rx="1" fill="#f2f2f2" stroke="#9d9d9d" stroke-width="1.3"/><line x1="1430.8" y1="222.3" x2="1435" y2="222.3" stroke="#b5b5b5" stroke-width="0.8"/><line x1="1430.8" y1="224.3" x2="1434" y2="224.3" stroke="#b5b5b5" stroke-width="0.8"/><line x1="1430.8" y1="226.3" x2="1433" y2="226.3" stroke="#b5b5b5" stroke-width="0.8"/><line x1="1434" y1="227.8" x2="1440.3" y2="221.6" stroke="#8a7a20" stroke-width="3"/><line x1="1434" y1="227.8" x2="1440.3" y2="221.6" stroke="#f2cf00" stroke-width="2"/><line x1="1439.6" y1="222.3" x2="1441.2" y2="220.8" stroke="#e03a2a" stroke-width="3"/><path d="M1432.6,229.3 L1433,227.2 L1434.7,228.9 Z" fill="#5a2a20"/><path d="M1455.4,220.3 C1455.5,218.4 1459.5,218.4 1459.6,220.3" fill="none" stroke="#cc0a0a" stroke-width="1.3"/><rect x="1451.8" y="219.7" width="11" height="1.9" rx="0.6" fill="#cc0a0a"/><path d="M1452.9,221.3 H1461.9 V230 A1.6,1.6 0 0 1 1460.3,231.6 H1454.5 A1.6,1.6 0 0 1 1452.9,230 Z" fill="#cc0a0a"/><rect x="1454.3" y="222.4" width="1" height="7.6" rx="0.5" fill="#fff"/><rect x="1456.9" y="222.4" width="1" height="7.6" rx="0.5" fill="#fff"/><rect x="1459.5" y="222.4" width="1" height="7.6" rx="0.5" fill="#fff"/></g>
<g transform="translate(0,86.33)"><rect x="1429.3" y="219.8" width="8" height="10.4" rx="1" fill="#f2f2f2" stroke="#9d9d9d" stroke-width="1.3"/><line x1="1430.8" y1="222.3" x2="1435" y2="222.3" stroke="#b5b5b5" stroke-width="0.8"/><line x1="1430.8" y1="224.3" x2="1434" y2="224.3" stroke="#b5b5b5" stroke-width="0.8"/><line x1="1430.8" y1="226.3" x2="1433" y2="226.3" stroke="#b5b5b5" stroke-width="0.8"/><line x1="1434" y1="227.8" x2="1440.3" y2="221.6" stroke="#8a7a20" stroke-width="3"/><line x1="1434" y1="227.8" x2="1440.3" y2="221.6" stroke="#f2cf00" stroke-width="2"/><line x1="1439.6" y1="222.3" x2="1441.2" y2="220.8" stroke="#e03a2a" stroke-width="3"/><path d="M1432.6,229.3 L1433,227.2 L1434.7,228.9 Z" fill="#5a2a20"/><path d="M1455.4,220.3 C1455.5,218.4 1459.5,218.4 1459.6,220.3" fill="none" stroke="#cc0a0a" stroke-width="1.3"/><rect x="1451.8" y="219.7" width="11" height="1.9" rx="0.6" fill="#cc0a0a"/><path d="M1452.9,221.3 H1461.9 V230 A1.6,1.6 0 0 1 1460.3,231.6 H1454.5 A1.6,1.6 0 0 1 1452.9,230 Z" fill="#cc0a0a"/><rect x="1454.3" y="222.4" width="1" height="7.6" rx="0.5" fill="#fff"/><rect x="1456.9" y="222.4" width="1" height="7.6" rx="0.5" fill="#fff"/><rect x="1459.5" y="222.4" width="1" height="7.6" rx="0.5" fill="#fff"/></g>
<g transform="translate(0,115.11)"><rect x="1429.3" y="219.8" width="8" height="10.4" rx="1" fill="#f2f2f2" stroke="#9d9d9d" stroke-width="1.3"/><line x1="1430.8" y1="222.3" x2="1435" y2="222.3" stroke="#b5b5b5" stroke-width="0.8"/><line x1="1430.8" y1="224.3" x2="1434" y2="224.3" stroke="#b5b5b5" stroke-width="0.8"/><line x1="1430.8" y1="226.3" x2="1433" y2="226.3" stroke="#b5b5b5" stroke-width="0.8"/><line x1="1434" y1="227.8" x2="1440.3" y2="221.6" stroke="#8a7a20" stroke-width="3"/><line x1="1434" y1="227.8" x2="1440.3" y2="221.6" stroke="#f2cf00" stroke-width="2"/><line x1="1439.6" y1="222.3" x2="1441.2" y2="220.8" stroke="#e03a2a" stroke-width="3"/><path d="M1432.6,229.3 L1433,227.2 L1434.7,228.9 Z" fill="#5a2a20"/><path d="M1455.4,220.3 C1455.5,218.4 1459.5,218.4 1459.6,220.3" fill="none" stroke="#cc0a0a" stroke-width="1.3"/><rect x="1451.8" y="219.7" width="11" height="1.9" rx="0.6" fill="#cc0a0a"/><path d="M1452.9,221.3 H1461.9 V230 A1.6,1.6 0 0 1 1460.3,231.6 H1454.5 A1.6,1.6 0 0 1 1452.9,230 Z" fill="#cc0a0a"/><rect x="1454.3" y="222.4" width="1" height="7.6" rx="0.5" fill="#fff"/><rect x="1456.9" y="222.4" width="1" height="7.6" rx="0.5" fill="#fff"/><rect x="1459.5" y="222.4" width="1" height="7.6" rx="0.5" fill="#fff"/></g>
<g transform="translate(0,143.89)"><rect x="1429.3" y="219.8" width="8" height="10.4" rx="1" fill="#f2f2f2" stroke="#9d9d9d" stroke-width="1.3"/><line x1="1430.8" y1="222.3" x2="1435" y2="222.3" stroke="#b5b5b5" stroke-width="0.8"/><line x1="1430.8" y1="224.3" x2="1434" y2="224.3" stroke="#b5b5b5" stroke-width="0.8"/><line x1="1430.8" y1="226.3" x2="1433" y2="226.3" stroke="#b5b5b5" stroke-width="0.8"/><line x1="1434" y1="227.8" x2="1440.3" y2="221.6" stroke="#8a7a20" stroke-width="3"/><line x1="1434" y1="227.8" x2="1440.3" y2="221.6" stroke="#f2cf00" stroke-width="2"/><line x1="1439.6" y1="222.3" x2="1441.2" y2="220.8" stroke="#e03a2a" stroke-width="3"/><path d="M1432.6,229.3 L1433,227.2 L1434.7,228.9 Z" fill="#5a2a20"/><path d="M1455.4,220.3 C1455.5,218.4 1459.5,218.4 1459.6,220.3" fill="none" stroke="#cc0a0a" stroke-width="1.3"/><rect x="1451.8" y="219.7" width="11" height="1.9" rx="0.6" fill="#cc0a0a"/><path d="M1452.9,221.3 H1461.9 V230 A1.6,1.6 0 0 1 1460.3,231.6 H1454.5 A1.6,1.6 0 0 1 1452.9,230 Z" fill="#cc0a0a"/><rect x="1454.3" y="222.4" width="1" height="7.6" rx="0.5" fill="#fff"/><rect x="1456.9" y="222.4" width="1" height="7.6" rx="0.5" fill="#fff"/><rect x="1459.5" y="222.4" width="1" height="7.6" rx="0.5" fill="#fff"/></g>
<g transform="translate(0,172.67)"><rect x="1429.3" y="219.8" width="8" height="10.4" rx="1" fill="#f2f2f2" stroke="#9d9d9d" stroke-width="1.3"/><line x1="1430.8" y1="222.3" x2="1435" y2="222.3" stroke="#b5b5b5" stroke-width="0.8"/><line x1="1430.8" y1="224.3" x2="1434" y2="224.3" stroke="#b5b5b5" stroke-width="0.8"/><line x1="1430.8" y1="226.3" x2="1433" y2="226.3" stroke="#b5b5b5" stroke-width="0.8"/><line x1="1434" y1="227.8" x2="1440.3" y2="221.6" stroke="#8a7a20" stroke-width="3"/><line x1="1434" y1="227.8" x2="1440.3" y2="221.6" stroke="#f2cf00" stroke-width="2"/><line x1="1439.6" y1="222.3" x2="1441.2" y2="220.8" stroke="#e03a2a" stroke-width="3"/><path d="M1432.6,229.3 L1433,227.2 L1434.7,228.9 Z" fill="#5a2a20"/><path d="M1455.4,220.3 C1455.5,218.4 1459.5,218.4 1459.6,220.3" fill="none" stroke="#cc0a0a" stroke-width="1.3"/><rect x="1451.8" y="219.7" width="11" height="1.9" rx="0.6" fill="#cc0a0a"/><path d="M1452.9,221.3 H1461.9 V230 A1.6,1.6 0 0 1 1460.3,231.6 H1454.5 A1.6,1.6 0 0 1 1452.9,230 Z" fill="#cc0a0a"/><rect x="1454.3" y="222.4" width="1" height="7.6" rx="0.5" fill="#fff"/><rect x="1456.9" y="222.4" width="1" height="7.6" rx="0.5" fill="#fff"/><rect x="1459.5" y="222.4" width="1" height="7.6" rx="0.5" fill="#fff"/></g>
<g transform="translate(0,201.45)"><rect x="1429.3" y="219.8" width="8" height="10.4" rx="1" fill="#f2f2f2" stroke="#9d9d9d" stroke-width="1.3"/><line x1="1430.8" y1="222.3" x2="1435" y2="222.3" stroke="#b5b5b5" stroke-width="0.8"/><line x1="1430.8" y1="224.3" x2="1434" y2="224.3" stroke="#b5b5b5" stroke-width="0.8"/><line x1="1430.8" y1="226.3" x2="1433" y2="226.3" stroke="#b5b5b5" stroke-width="0.8"/><line x1="1434" y1="227.8" x2="1440.3" y2="221.6" stroke="#8a7a20" stroke-width="3"/><line x1="1434" y1="227.8" x2="1440.3" y2="221.6" stroke="#f2cf00" stroke-width="2"/><line x1="1439.6" y1="222.3" x2="1441.2" y2="220.8" stroke="#e03a2a" stroke-width="3"/><path d="M1432.6,229.3 L1433,227.2 L1434.7,228.9 Z" fill="#5a2a20"/><path d="M1455.4,220.3 C1455.5,218.4 1459.5,218.4 1459.6,220.3" fill="none" stroke="#cc0a0a" stroke-width="1.3"/><rect x="1451.8" y="219.7" width="11" height="1.9" rx="0.6" fill="#cc0a0a"/><path d="M1452.9,221.3 H1461.9 V230 A1.6,1.6 0 0 1 1460.3,231.6 H1454.5 A1.6,1.6 0 0 1 1452.9,230 Z" fill="#cc0a0a"/><rect x="1454.3" y="222.4" width="1" height="7.6" rx="0.5" fill="#fff"/><rect x="1456.9" y="222.4" width="1" height="7.6" rx="0.5" fill="#fff"/><rect x="1459.5" y="222.4" width="1" height="7.6" rx="0.5" fill="#fff"/></g>
<g transform="translate(0,230.23)"><rect x="1429.3" y="219.8" width="8" height="10.4" rx="1" fill="#f2f2f2" stroke="#9d9d9d" stroke-width="1.3"/><line x1="1430.8" y1="222.3" x2="1435" y2="222.3" stroke="#b5b5b5" stroke-width="0.8"/><line x1="1430.8" y1="224.3" x2="1434" y2="224.3" stroke="#b5b5b5" stroke-width="0.8"/><line x1="1430.8" y1="226.3" x2="1433" y2="226.3" stroke="#b5b5b5" stroke-width="0.8"/><line x1="1434" y1="227.8" x2="1440.3" y2="221.6" stroke="#8a7a20" stroke-width="3"/><line x1="1434" y1="227.8" x2="1440.3" y2="221.6" stroke="#f2cf00" stroke-width="2"/><line x1="1439.6" y1="222.3" x2="1441.2" y2="220.8" stroke="#e03a2a" stroke-width="3"/><path d="M1432.6,229.3 L1433,227.2 L1434.7,228.9 Z" fill="#5a2a20"/><path d="M1455.4,220.3 C1455.5,218.4 1459.5,218.4 1459.6,220.3" fill="none" stroke="#cc0a0a" stroke-width="1.3"/><rect x="1451.8" y="219.7" width="11" height="1.9" rx="0.6" fill="#cc0a0a"/><path d="M1452.9,221.3 H1461.9 V230 A1.6,1.6 0 0 1 1460.3,231.6 H1454.5 A1.6,1.6 0 0 1 1452.9,230 Z" fill="#cc0a0a"/><rect x="1454.3" y="222.4" width="1" height="7.6" rx="0.5" fill="#fff"/><rect x="1456.9" y="222.4" width="1" height="7.6" rx="0.5" fill="#fff"/><rect x="1459.5" y="222.4" width="1" height="7.6" rx="0.5" fill="#fff"/></g>
<g transform="translate(0,259.01)"><rect x="1429.3" y="219.8" width="8" height="10.4" rx="1" fill="#f2f2f2" stroke="#9d9d9d" stroke-width="1.3"/><line x1="1430.8" y1="222.3" x2="1435" y2="222.3" stroke="#b5b5b5" stroke-width="0.8"/><line x1="1430.8" y1="224.3" x2="1434" y2="224.3" stroke="#b5b5b5" stroke-width="0.8"/><line x1="1430.8" y1="226.3" x2="1433" y2="226.3" stroke="#b5b5b5" stroke-width="0.8"/><line x1="1434" y1="227.8" x2="1440.3" y2="221.6" stroke="#8a7a20" stroke-width="3"/><line x1="1434" y1="227.8" x2="1440.3" y2="221.6" stroke="#f2cf00" stroke-width="2"/><line x1="1439.6" y1="222.3" x2="1441.2" y2="220.8" stroke="#e03a2a" stroke-width="3"/><path d="M1432.6,229.3 L1433,227.2 L1434.7,228.9 Z" fill="#5a2a20"/><path d="M1455.4,220.3 C1455.5,218.4 1459.5,218.4 1459.6,220.3" fill="none" stroke="#cc0a0a" stroke-width="1.3"/><rect x="1451.8" y="219.7" width="11" height="1.9" rx="0.6" fill="#cc0a0a"/><path d="M1452.9,221.3 H1461.9 V230 A1.6,1.6 0 0 1 1460.3,231.6 H1454.5 A1.6,1.6 0 0 1 1452.9,230 Z" fill="#cc0a0a"/><rect x="1454.3" y="222.4" width="1" height="7.6" rx="0.5" fill="#fff"/><rect x="1456.9" y="222.4" width="1" height="7.6" rx="0.5" fill="#fff"/><rect x="1459.5" y="222.4" width="1" height="7.6" rx="0.5" fill="#fff"/></g>
<g transform="translate(0,287.79)"><rect x="1429.3" y="219.8" width="8" height="10.4" rx="1" fill="#f2f2f2" stroke="#9d9d9d" stroke-width="1.3"/><line x1="1430.8" y1="222.3" x2="1435" y2="222.3" stroke="#b5b5b5" stroke-width="0.8"/><line x1="1430.8" y1="224.3" x2="1434" y2="224.3" stroke="#b5b5b5" stroke-width="0.8"/><line x1="1430.8" y1="226.3" x2="1433" y2="226.3" stroke="#b5b5b5" stroke-width="0.8"/><line x1="1434" y1="227.8" x2="1440.3" y2="221.6" stroke="#8a7a20" stroke-width="3"/><line x1="1434" y1="227.8" x2="1440.3" y2="221.6" stroke="#f2cf00" stroke-width="2"/><line x1="1439.6" y1="222.3" x2="1441.2" y2="220.8" stroke="#e03a2a" stroke-width="3"/><path d="M1432.6,229.3 L1433,227.2 L1434.7,228.9 Z" fill="#5a2a20"/><path d="M1455.4,220.3 C1455.5,218.4 1459.5,218.4 1459.6,220.3" fill="none" stroke="#cc0a0a" stroke-width="1.3"/><rect x="1451.8" y="219.7" width="11" height="1.9" rx="0.6" fill="#cc0a0a"/><path d="M1452.9,221.3 H1461.9 V230 A1.6,1.6 0 0 1 1460.3,231.6 H1454.5 A1.6,1.6 0 0 1 1452.9,230 Z" fill="#cc0a0a"/><rect x="1454.3" y="222.4" width="1" height="7.6" rx="0.5" fill="#fff"/><rect x="1456.9" y="222.4" width="1" height="7.6" rx="0.5" fill="#fff"/><rect x="1459.5" y="222.4" width="1" height="7.6" rx="0.5" fill="#fff"/></g>
<g transform="translate(0,316.57)"><rect x="1429.3" y="219.8" width="8" height="10.4" rx="1" fill="#f2f2f2" stroke="#9d9d9d" stroke-width="1.3"/><line x1="1430.8" y1="222.3" x2="1435" y2="222.3" stroke="#b5b5b5" stroke-width="0.8"/><line x1="1430.8" y1="224.3" x2="1434" y2="224.3" stroke="#b5b5b5" stroke-width="0.8"/><line x1="1430.8" y1="226.3" x2="1433" y2="226.3" stroke="#b5b5b5" stroke-width="0.8"/><line x1="1434" y1="227.8" x2="1440.3" y2="221.6" stroke="#8a7a20" stroke-width="3"/><line x1="1434" y1="227.8" x2="1440.3" y2="221.6" stroke="#f2cf00" stroke-width="2"/><line x1="1439.6" y1="222.3" x2="1441.2" y2="220.8" stroke="#e03a2a" stroke-width="3"/><path d="M1432.6,229.3 L1433,227.2 L1434.7,228.9 Z" fill="#5a2a20"/><path d="M1455.4,220.3 C1455.5,218.4 1459.5,218.4 1459.6,220.3" fill="none" stroke="#cc0a0a" stroke-width="1.3"/><rect x="1451.8" y="219.7" width="11" height="1.9" rx="0.6" fill="#cc0a0a"/><path d="M1452.9,221.3 H1461.9 V230 A1.6,1.6 0 0 1 1460.3,231.6 H1454.5 A1.6,1.6 0 0 1 1452.9,230 Z" fill="#cc0a0a"/><rect x="1454.3" y="222.4" width="1" height="7.6" rx="0.5" fill="#fff"/><rect x="1456.9" y="222.4" width="1" height="7.6" rx="0.5" fill="#fff"/><rect x="1459.5" y="222.4" width="1" height="7.6" rx="0.5" fill="#fff"/></g>
<g transform="translate(0,345.35)"><rect x="1429.3" y="219.8" width="8" height="10.4" rx="1" fill="#f2f2f2" stroke="#9d9d9d" stroke-width="1.3"/><line x1="1430.8" y1="222.3" x2="1435" y2="222.3" stroke="#b5b5b5" stroke-width="0.8"/><line x1="1430.8" y1="224.3" x2="1434" y2="224.3" stroke="#b5b5b5" stroke-width="0.8"/><line x1="1430.8" y1="226.3" x2="1433" y2="226.3" stroke="#b5b5b5" stroke-width="0.8"/><line x1="1434" y1="227.8" x2="1440.3" y2="221.6" stroke="#8a7a20" stroke-width="3"/><line x1="1434" y1="227.8" x2="1440.3" y2="221.6" stroke="#f2cf00" stroke-width="2"/><line x1="1439.6" y1="222.3" x2="1441.2" y2="220.8" stroke="#e03a2a" stroke-width="3"/><path d="M1432.6,229.3 L1433,227.2 L1434.7,228.9 Z" fill="#5a2a20"/><path d="M1455.4,220.3 C1455.5,218.4 1459.5,218.4 1459.6,220.3" fill="none" stroke="#cc0a0a" stroke-width="1.3"/><rect x="1451.8" y="219.7" width="11" height="1.9" rx="0.6" fill="#cc0a0a"/><path d="M1452.9,221.3 H1461.9 V230 A1.6,1.6 0 0 1 1460.3,231.6 H1454.5 A1.6,1.6 0 0 1 1452.9,230 Z" fill="#cc0a0a"/><rect x="1454.3" y="222.4" width="1" height="7.6" rx="0.5" fill="#fff"/><rect x="1456.9" y="222.4" width="1" height="7.6" rx="0.5" fill="#fff"/><rect x="1459.5" y="222.4" width="1" height="7.6" rx="0.5" fill="#fff"/></g>
<g transform="translate(0,374.13)"><rect x="1429.3" y="219.8" width="8" height="10.4" rx="1" fill="#f2f2f2" stroke="#9d9d9d" stroke-width="1.3"/><line x1="1430.8" y1="222.3" x2="1435" y2="222.3" stroke="#b5b5b5" stroke-width="0.8"/><line x1="1430.8" y1="224.3" x2="1434" y2="224.3" stroke="#b5b5b5" stroke-width="0.8"/><line x1="1430.8" y1="226.3" x2="1433" y2="226.3" stroke="#b5b5b5" stroke-width="0.8"/><line x1="1434" y1="227.8" x2="1440.3" y2="221.6" stroke="#8a7a20" stroke-width="3"/><line x1="1434" y1="227.8" x2="1440.3" y2="221.6" stroke="#f2cf00" stroke-width="2"/><line x1="1439.6" y1="222.3" x2="1441.2" y2="220.8" stroke="#e03a2a" stroke-width="3"/><path d="M1432.6,229.3 L1433,227.2 L1434.7,228.9 Z" fill="#5a2a20"/><path d="M1455.4,220.3 C1455.5,218.4 1459.5,218.4 1459.6,220.3" fill="none" stroke="#cc0a0a" stroke-width="1.3"/><rect x="1451.8" y="219.7" width="11" height="1.9" rx="0.6" fill="#cc0a0a"/><path d="M1452.9,221.3 H1461.9 V230 A1.6,1.6 0 0 1 1460.3,231.6 H1454.5 A1.6,1.6 0 0 1 1452.9,230 Z" fill="#cc0a0a"/><rect x="1454.3" y="222.4" width="1" height="7.6" rx="0.5" fill="#fff"/><rect x="1456.9" y="222.4" width="1" height="7.6" rx="0.5" fill="#fff"/><rect x="1459.5" y="222.4" width="1" height="7.6" rx="0.5" fill="#fff"/></g>
<path d="M89.2,619.9 V625.5" stroke="#cfcfcf" stroke-width="1.1"/><path d="M94.8,619.8 L90,622.7 L94.8,625.6 Z" fill="#cfcfcf"/>
<path d="M119,619.8 L114.3,622.7 L119,625.6 Z" fill="#cfcfcf"/>
<path d="M186,619.7 L191.4,622.9 L186,626.1 Z" fill="#1e1e1e"/>
<path d="M209.5,619.7 L214.6,622.9 L209.5,626.1 Z" fill="#1e1e1e"/><path d="M215.4,619.7 V626.1" stroke="#1e1e1e" stroke-width="1.2"/>
<text x="0" y="0" transform="translate(1518.2,465.3) rotate(90)" font-size="10" fill="#6cbf78" letter-spacing="1.9" textLength="59.5" lengthAdjust="spacing">Feedback</text>
<path d="M1450.1,703.6 C1445.8,704.2 1442.6,706.8 1442.8,710 C1443,712.6 1445,714.4 1447.9,714.8 Z" fill="#06473a"/>
<path d="M1459,705.4 C1454.6,706 1451.5,708.6 1451.7,711.8 C1451.9,714.4 1453.9,716.3 1456.9,716.6 Z" fill="#06473a"/>
<path d="M1468.3,717.8 L1453.6,723.8 C1455.6,727.4 1459.6,729 1463.6,727.8 C1467.4,726.6 1469.4,722.4 1468.3,717.8 Z" fill="#06d548"/>
<text x="142.17" y="32.00" font-size="18.3" fill="#1c1c1c" textLength="96.35" lengthAdjust="spacingAndGlyphs">ConverSight</text>
<text x="575.51" y="27.80" font-size="10.3" fill="#1b1d35" stroke="#1b1d35" stroke-width="0.3" textLength="44.68" lengthAdjust="spacingAndGlyphs">Insights</text>
<text x="664.62" y="27.80" font-size="10.3" fill="#1b1d35" stroke="#1b1d35" stroke-width="0.3" textLength="46.75" lengthAdjust="spacingAndGlyphs">Explorer</text>
<text x="755.52" y="27.80" font-size="10.3" fill="#1b1d35" stroke="#1b1d35" stroke-width="0.3" textLength="61.76" lengthAdjust="spacingAndGlyphs">Storyboard</text>
<text x="859.52" y="27.80" font-size="10.3" fill="#1b1d35" stroke="#1b1d35" stroke-width="0.3" textLength="77.66" lengthAdjust="spacingAndGlyphs">Control Tower</text>
<text x="982.32" y="27.80" font-size="10.3" fill="#1b1d35" stroke="#1b1d35" stroke-width="0.3" textLength="62.05" lengthAdjust="spacingAndGlyphs">Launchpad</text>
<text x="1417.13" y="29.10" font-size="10.8" fill="#4a4a55" textLength="39.24" lengthAdjust="spacingAndGlyphs">Athena</text>
<text x="67.02" y="83.70" font-size="19.8" fill="#333333" textLength="293.86" lengthAdjust="spacingAndGlyphs">SME Configuration - Supply Chain</text>
<text x="75.70" y="120.00" font-size="11.8" fill="#474747" textLength="62.30" lengthAdjust="spacingAndGlyphs">Subject Areas</text>
<text x="172.00" y="120.00" font-size="11.8" fill="#474747" textLength="24.00" lengthAdjust="spacingAndGlyphs">Table</text>
<text x="239.99" y="120.00" font-size="11.8" fill="#474747" textLength="40.31" lengthAdjust="spacingAndGlyphs">Columns</text>
<text x="308.49" y="120.00" font-size="11.8" fill="#474747" textLength="56.31" lengthAdjust="spacingAndGlyphs">Relationship</text>
<text x="388.37" y="120.00" font-size="11.8" fill="#474747" textLength="49.86" lengthAdjust="spacingAndGlyphs">Drill Down</text>
<text x="459.59" y="120.00" font-size="11.8" fill="#474747" textLength="80.41" lengthAdjust="spacingAndGlyphs">Proactive Insights</text>
<text x="556.09" y="120.00" font-size="11.8" fill="#474747" textLength="71.23" lengthAdjust="spacingAndGlyphs">Help Questions</text>
<text x="82.65" y="165.50" font-size="12" fill="#9a9a9a" font-style="italic" textLength="36.69" lengthAdjust="spacingAndGlyphs">Search</text>
<text x="471.40" y="166.30" font-size="12.3" fill="#444" textLength="78.30" lengthAdjust="spacingAndGlyphs">Total Records: 29</text>
<text x="552.77" y="166.30" font-size="8.2" fill="#444" textLength="18.36" lengthAdjust="spacingAndGlyphs">items</text>
<text x="613.20" y="166.30" font-size="12.3" fill="#444" textLength="127.11" lengthAdjust="spacingAndGlyphs">Change all dimensions to ID</text>
<text x="1280.97" y="162.90" font-size="12" fill="#fff" stroke="#fff" stroke-width="0.25" textLength="103.26" lengthAdjust="spacingAndGlyphs">Generate Vocabulary</text>
<text x="85.71" y="199.80" font-size="10.3" fill="#ffffff" font-weight="700" textLength="62.58" lengthAdjust="spacingAndGlyphs">TABLE NAME</text>
<text x="237.20" y="199.80" font-size="10.3" fill="#ffffff" font-weight="700" textLength="75.09" lengthAdjust="spacingAndGlyphs">COLUMN NAME</text>
<text x="426.49" y="199.80" font-size="10.3" fill="#ffffff" font-weight="700">CATEGORY</text>
<text x="565.99" y="199.80" font-size="10.3" fill="#ffffff" font-weight="700">TYPE</text>
<text x="717.89" y="199.80" font-size="10.3" fill="#ffffff" font-weight="700">UNIT</text>
<text x="844.12" y="199.80" font-size="10.3" fill="#ffffff" font-weight="700" textLength="41.96" lengthAdjust="spacingAndGlyphs">DEFAULT</text>
<text x="932.61" y="199.80" font-size="10.3" fill="#ffffff" font-weight="700" textLength="50.27" lengthAdjust="spacingAndGlyphs">VISIBLE I...</text>
<text x="1021.32" y="199.80" font-size="10.3" fill="#ffffff" font-weight="700" textLength="106.56" lengthAdjust="spacingAndGlyphs">VISIBLE IN FREE FLOW</text>
<text x="1173.32" y="199.80" font-size="10.3" fill="#ffffff" font-weight="700" textLength="65.96" lengthAdjust="spacingAndGlyphs">VOCABULARY</text>
<text x="1425.72" y="199.80" font-size="10.3" fill="#ffffff" font-weight="700" textLength="21.57" lengthAdjust="spacingAndGlyphs">AC...</text>
<text x="237.09" y="227.90" font-size="11" fill="#22b1d3" stroke="#22b1d3" stroke-width="0.1" textLength="77.11" lengthAdjust="spacingAndGlyphs">Sq_sales_details</text>
<text x="426.80" y="227.90" font-size="11" fill="#555555" stroke="#555555" stroke-width="0.1" textLength="57.61" lengthAdjust="spacingAndGlyphs">Smart Query</text>
<text x="566.00" y="227.90" font-size="11" fill="#555555" stroke="#555555" stroke-width="0.1" textLength="40.49" lengthAdjust="spacingAndGlyphs">--Select--</text>
<text x="717.90" y="227.90" font-size="11" fill="#555555" stroke="#555555" stroke-width="0.1" textLength="40.49" lengthAdjust="spacingAndGlyphs">--Select--</text>
<text x="237.09" y="256.99" font-size="11" fill="#22b1d3" stroke="#22b1d3" stroke-width="0.1" textLength="84.21" lengthAdjust="spacingAndGlyphs">Cm_sample_sales</text>
<text x="426.78" y="256.99" font-size="11" fill="#555555" stroke="#555555" stroke-width="0.1" textLength="81.13" lengthAdjust="spacingAndGlyphs">Calculated Metric</text>
<text x="566.00" y="256.99" font-size="11" fill="#555555" stroke="#555555" stroke-width="0.1" textLength="40.49" lengthAdjust="spacingAndGlyphs">--Select--</text>
<text x="717.90" y="256.99" font-size="11" fill="#555555" stroke="#555555" stroke-width="0.1" textLength="40.49" lengthAdjust="spacingAndGlyphs">--Select--</text>
<text x="1173.19" y="255.39" font-size="11" fill="#555555" stroke="#555555" stroke-width="0.1" textLength="61.23" lengthAdjust="spacingAndGlyphs">sample sales</text>
<text x="85.33" y="285.75" font-size="11" fill="#555555" stroke="#555555" stroke-width="0.1" textLength="47.58" lengthAdjust="spacingAndGlyphs">retailsales</text>
<text x="237.09" y="285.75" font-size="11" fill="#555555" stroke="#555555" stroke-width="0.1" textLength="24.93" lengthAdjust="spacingAndGlyphs">Store</text>
<text x="426.79" y="285.75" font-size="11" fill="#555555" stroke="#555555" stroke-width="0.1" textLength="54.83" lengthAdjust="spacingAndGlyphs">Dimensions</text>
<text x="566.00" y="285.75" font-size="11" fill="#555555" stroke="#555555" stroke-width="0.1" textLength="40.49" lengthAdjust="spacingAndGlyphs">--Select--</text>
<text x="717.90" y="285.75" font-size="11" fill="#555555" stroke="#555555" stroke-width="0.1" textLength="40.49" lengthAdjust="spacingAndGlyphs">--Select--</text>
<text x="1173.18" y="284.15" font-size="11" fill="#555555" stroke="#555555" stroke-width="0.1" textLength="23.84" lengthAdjust="spacingAndGlyphs">store</text>
<text x="85.33" y="314.51" font-size="11" fill="#555555" stroke="#555555" stroke-width="0.1" textLength="47.58" lengthAdjust="spacingAndGlyphs">retailsales</text>
<text x="237.09" y="314.51" font-size="11" fill="#555555" stroke="#555555" stroke-width="0.1" textLength="42.02" lengthAdjust="spacingAndGlyphs">Category</text>
<text x="426.79" y="314.51" font-size="11" fill="#555555" stroke="#555555" stroke-width="0.1" textLength="54.83" lengthAdjust="spacingAndGlyphs">Dimensions</text>
<text x="566.00" y="314.51" font-size="11" fill="#555555" stroke="#555555" stroke-width="0.1" textLength="40.49" lengthAdjust="spacingAndGlyphs">--Select--</text>
<text x="717.90" y="314.51" font-size="11" fill="#555555" stroke="#555555" stroke-width="0.1" textLength="40.49" lengthAdjust="spacingAndGlyphs">--Select--</text>
<text x="1173.18" y="312.91" font-size="11" fill="#555555" stroke="#555555" stroke-width="0.1" textLength="40.43" lengthAdjust="spacingAndGlyphs">category</text>
<text x="85.33" y="343.27" font-size="11" fill="#555555" stroke="#555555" stroke-width="0.1" textLength="47.58" lengthAdjust="spacingAndGlyphs">retailsales</text>
<text x="237.09" y="343.27" font-size="11" fill="#555555" stroke="#555555" stroke-width="0.1" textLength="38.11" lengthAdjust="spacingAndGlyphs">Store_id</text>
<text x="426.79" y="343.27" font-size="11" fill="#555555" stroke="#555555" stroke-width="0.1" textLength="54.83" lengthAdjust="spacingAndGlyphs">Dimensions</text>
<text x="565.98" y="343.27" font-size="11" fill="#555555" stroke="#555555" stroke-width="0.1" textLength="8.84" lengthAdjust="spacingAndGlyphs">Id</text>
<text x="717.90" y="343.27" font-size="11" fill="#555555" stroke="#555555" stroke-width="0.1" textLength="40.49" lengthAdjust="spacingAndGlyphs">--Select--</text>
<text x="1173.19" y="341.67" font-size="11" fill="#555555" stroke="#555555" stroke-width="0.1" textLength="34.33" lengthAdjust="spacingAndGlyphs">store id</text>
<text x="85.33" y="372.03" font-size="11" fill="#555555" stroke="#555555" stroke-width="0.1" textLength="47.58" lengthAdjust="spacingAndGlyphs">retailsales</text>
<text x="237.10" y="372.03" font-size="11" fill="#555555" stroke="#555555" stroke-width="0.1" textLength="49.11" lengthAdjust="spacingAndGlyphs">Store_type</text>
<text x="426.79" y="372.03" font-size="11" fill="#555555" stroke="#555555" stroke-width="0.1" textLength="54.83" lengthAdjust="spacingAndGlyphs">Dimensions</text>
<text x="566.00" y="372.03" font-size="11" fill="#555555" stroke="#555555" stroke-width="0.1" textLength="40.49" lengthAdjust="spacingAndGlyphs">--Select--</text>
<text x="717.90" y="372.03" font-size="11" fill="#555555" stroke="#555555" stroke-width="0.1" textLength="40.49" lengthAdjust="spacingAndGlyphs">--Select--</text>
<text x="1173.18" y="370.43" font-size="11" fill="#555555" stroke="#555555" stroke-width="0.1" textLength="46.23" lengthAdjust="spacingAndGlyphs">store type</text>
<text x="85.33" y="400.79" font-size="11" fill="#555555" stroke="#555555" stroke-width="0.1" textLength="47.58" lengthAdjust="spacingAndGlyphs">retailsales</text>
<text x="237.10" y="400.79" font-size="11" fill="#555555" stroke="#555555" stroke-width="0.1" textLength="71.80" lengthAdjust="spacingAndGlyphs">Days_to_deliver</text>
<text x="426.77" y="400.79" font-size="11" fill="#555555" stroke="#555555" stroke-width="0.1" textLength="35.05" lengthAdjust="spacingAndGlyphs">Metrics</text>
<text x="565.98" y="400.79" font-size="11" fill="#555555" stroke="#555555" stroke-width="0.1" textLength="39.23" lengthAdjust="spacingAndGlyphs">Quantity</text>
<text x="717.90" y="400.79" font-size="11" fill="#555555" stroke="#555555" stroke-width="0.1" textLength="40.49" lengthAdjust="spacingAndGlyphs">--Select--</text>
<text x="1173.19" y="399.19" font-size="11" fill="#555555" stroke="#555555" stroke-width="0.1" textLength="66.82" lengthAdjust="spacingAndGlyphs">days to deliver</text>
<text x="85.33" y="429.55" font-size="11" fill="#555555" stroke="#555555" stroke-width="0.1" textLength="47.58" lengthAdjust="spacingAndGlyphs">retailsales</text>
<text x="237.09" y="429.55" font-size="11" fill="#555555" stroke="#555555" stroke-width="0.1" textLength="24.33" lengthAdjust="spacingAndGlyphs">State</text>
<text x="426.79" y="429.55" font-size="11" fill="#555555" stroke="#555555" stroke-width="0.1" textLength="54.83" lengthAdjust="spacingAndGlyphs">Dimensions</text>
<text x="566.00" y="429.55" font-size="11" fill="#555555" stroke="#555555" stroke-width="0.1" textLength="40.49" lengthAdjust="spacingAndGlyphs">--Select--</text>
<text x="717.90" y="429.55" font-size="11" fill="#555555" stroke="#555555" stroke-width="0.1" textLength="40.49" lengthAdjust="spacingAndGlyphs">--Select--</text>
<text x="1173.18" y="427.95" font-size="11" fill="#555555" stroke="#555555" stroke-width="0.1" textLength="23.24" lengthAdjust="spacingAndGlyphs">state</text>
<text x="85.33" y="458.31" font-size="11" fill="#555555" stroke="#555555" stroke-width="0.1" textLength="47.58" lengthAdjust="spacingAndGlyphs">retailsales</text>
<text x="237.09" y="458.31" font-size="11" fill="#555555" stroke="#555555" stroke-width="0.1" textLength="13.01" lengthAdjust="spacingAndGlyphs">Os</text>
<text x="426.79" y="458.31" font-size="11" fill="#555555" stroke="#555555" stroke-width="0.1" textLength="54.83" lengthAdjust="spacingAndGlyphs">Dimensions</text>
<text x="566.00" y="458.31" font-size="11" fill="#555555" stroke="#555555" stroke-width="0.1" textLength="40.49" lengthAdjust="spacingAndGlyphs">--Select--</text>
<text x="717.90" y="458.31" font-size="11" fill="#555555" stroke="#555555" stroke-width="0.1" textLength="40.49" lengthAdjust="spacingAndGlyphs">--Select--</text>
<text x="1173.18" y="456.71" font-size="11" fill="#555555" stroke="#555555" stroke-width="0.1" textLength="11.24" lengthAdjust="spacingAndGlyphs">os</text>
<text x="85.33" y="487.07" font-size="11" fill="#555555" stroke="#555555" stroke-width="0.1" textLength="47.58" lengthAdjust="spacingAndGlyphs">retailsales</text>
<text x="237.09" y="487.07" font-size="11" fill="#555555" stroke="#555555" stroke-width="0.1" textLength="51.82" lengthAdjust="spacingAndGlyphs">Item_name</text>
<text x="426.79" y="487.07" font-size="11" fill="#555555" stroke="#555555" stroke-width="0.1" textLength="54.83" lengthAdjust="spacingAndGlyphs">Dimensions</text>
<text x="566.00" y="487.07" font-size="11" fill="#555555" stroke="#555555" stroke-width="0.1" textLength="40.49" lengthAdjust="spacingAndGlyphs">--Select--</text>
<text x="717.90" y="487.07" font-size="11" fill="#555555" stroke="#555555" stroke-width="0.1" textLength="40.49" lengthAdjust="spacingAndGlyphs">--Select--</text>
<text x="1173.18" y="485.47" font-size="11" fill="#555555" stroke="#555555" stroke-width="0.1" textLength="49.33" lengthAdjust="spacingAndGlyphs">item name</text>
<text x="85.33" y="515.83" font-size="11" fill="#555555" stroke="#555555" stroke-width="0.1" textLength="47.58" lengthAdjust="spacingAndGlyphs">retailsales</text>
<text x="237.10" y="515.83" font-size="11" fill="#555555" stroke="#555555" stroke-width="0.1" textLength="50.71" lengthAdjust="spacingAndGlyphs">Sales_date</text>
<text x="426.79" y="515.83" font-size="11" fill="#555555" stroke="#555555" stroke-width="0.1" textLength="21.61" lengthAdjust="spacingAndGlyphs">Date</text>
<text x="566.00" y="515.83" font-size="11" fill="#555555" stroke="#555555" stroke-width="0.1" textLength="63.39" lengthAdjust="spacingAndGlyphs">MM-DD-YYYY</text>
<text x="717.90" y="515.83" font-size="11" fill="#555555" stroke="#555555" stroke-width="0.1" textLength="40.49" lengthAdjust="spacingAndGlyphs">--Select--</text>
<text x="1173.19" y="514.23" font-size="11" fill="#555555" stroke="#555555" stroke-width="0.1" textLength="47.53" lengthAdjust="spacingAndGlyphs">sales date</text>
<text x="85.33" y="544.59" font-size="11" fill="#555555" stroke="#555555" stroke-width="0.1" textLength="47.58" lengthAdjust="spacingAndGlyphs">retailsales</text>
<text x="237.08" y="544.59" font-size="11" fill="#555555" stroke="#555555" stroke-width="0.1" textLength="18.24" lengthAdjust="spacingAndGlyphs">City</text>
<text x="426.79" y="544.59" font-size="11" fill="#555555" stroke="#555555" stroke-width="0.1" textLength="54.83" lengthAdjust="spacingAndGlyphs">Dimensions</text>
<text x="566.00" y="544.59" font-size="11" fill="#555555" stroke="#555555" stroke-width="0.1" textLength="40.49" lengthAdjust="spacingAndGlyphs">--Select--</text>
<text x="717.90" y="544.59" font-size="11" fill="#555555" stroke="#555555" stroke-width="0.1" textLength="40.49" lengthAdjust="spacingAndGlyphs">--Select--</text>
<text x="1173.17" y="542.99" font-size="11" fill="#555555" stroke="#555555" stroke-width="0.1" textLength="16.35" lengthAdjust="spacingAndGlyphs">city</text>
<text x="85.33" y="573.35" font-size="11" fill="#555555" stroke="#555555" stroke-width="0.1" textLength="47.58" lengthAdjust="spacingAndGlyphs">retailsales</text>
<text x="237.08" y="573.35" font-size="11" fill="#555555" stroke="#555555" stroke-width="0.1" textLength="24.14" lengthAdjust="spacingAndGlyphs">Units</text>
<text x="426.77" y="573.35" font-size="11" fill="#555555" stroke="#555555" stroke-width="0.1" textLength="35.05" lengthAdjust="spacingAndGlyphs">Metrics</text>
<text x="565.98" y="573.35" font-size="11" fill="#555555" stroke="#555555" stroke-width="0.1" textLength="39.23" lengthAdjust="spacingAndGlyphs">Quantity</text>
<text x="717.90" y="573.35" font-size="11" fill="#555555" stroke="#555555" stroke-width="0.1" textLength="40.49" lengthAdjust="spacingAndGlyphs">--Select--</text>
<text x="1173.17" y="571.75" font-size="11" fill="#555555" stroke="#555555" stroke-width="0.1" textLength="22.95" lengthAdjust="spacingAndGlyphs">units</text>
<text x="85.33" y="602.11" font-size="11" fill="#555555" stroke="#555555" stroke-width="0.1" textLength="47.58" lengthAdjust="spacingAndGlyphs">retailsales</text>
<text x="237.09" y="602.11" font-size="11" fill="#555555" stroke="#555555" stroke-width="0.1" textLength="27.52" lengthAdjust="spacingAndGlyphs">Street</text>
<text x="426.79" y="602.11" font-size="11" fill="#555555" stroke="#555555" stroke-width="0.1" textLength="54.83" lengthAdjust="spacingAndGlyphs">Dimensions</text>
<text x="566.00" y="602.11" font-size="11" fill="#555555" stroke="#555555" stroke-width="0.1" textLength="40.49" lengthAdjust="spacingAndGlyphs">--Select--</text>
<text x="717.90" y="602.11" font-size="11" fill="#555555" stroke="#555555" stroke-width="0.1" textLength="40.49" lengthAdjust="spacingAndGlyphs">--Select--</text>
<text x="1173.18" y="600.51" font-size="11" fill="#555555" stroke="#555555" stroke-width="0.1" textLength="26.95" lengthAdjust="spacingAndGlyphs">street</text>
<text x="1398.58" y="625.50" font-size="11" fill="#8d8d8d" textLength="81.33" lengthAdjust="spacingAndGlyphs">1 - 25 of 29 items</text>
<text x="86.87" y="656.70" font-size="12.3" fill="#fff" stroke="#fff" stroke-width="0.25" textLength="83.55" lengthAdjust="spacingAndGlyphs">Calculated Fields</text>
<text x="197.28" y="656.70" font-size="12.3" fill="#fff" stroke="#fff" stroke-width="0.25" textLength="77.85" lengthAdjust="spacingAndGlyphs">Summary Fields</text>
<text x="301.67" y="656.70" font-size="12.3" fill="#fff" stroke="#fff" stroke-width="0.25" textLength="62.87" lengthAdjust="spacingAndGlyphs">Smart Query</text>
<text x="1342.68" y="656.70" font-size="12.3" fill="#c8c8c8" textLength="27.43" lengthAdjust="spacingAndGlyphs">Reset</text>
<text x="1397.70" y="656.70" font-size="12.3" fill="#fff" stroke="#fff" stroke-width="0.25" textLength="23.11" lengthAdjust="spacingAndGlyphs">Save</text>
<text x="1448.38" y="656.70" font-size="12.3" fill="#fff" stroke="#fff" stroke-width="0.25" textLength="35.14" lengthAdjust="spacingAndGlyphs">Publish</text>
<text x="701.76" y="750.30" font-size="7.8" fill="#8a8a8a" textLength="171.47" lengthAdjust="spacingAndGlyphs">Release v2.1.0 Copyright © 2025 ConverSight.ai.</text>
<text x="138.07" y="626.10" font-size="11.2" fill="#444" textLength="6.05" lengthAdjust="spacingAndGlyphs">1</text>
<text x="161.04" y="626.10" font-size="11.2" fill="#444" textLength="6.61" lengthAdjust="spacingAndGlyphs">2</text>
<text x="622.31" y="39.10" font-size="8.5" fill="#fff" font-weight="700" textLength="5.38" lengthAdjust="spacingAndGlyphs">2</text>
<text x="820.01" y="39.10" font-size="8.5" fill="#fff" font-weight="700" textLength="5.38" lengthAdjust="spacingAndGlyphs">3</text>
<text x="1372.14" y="40.40" font-size="8" fill="#f2f2d0" font-weight="700" textLength="2.91" lengthAdjust="spacingAndGlyphs">1</text>
</svg>
<div id="A">
<div style="left:76px;top:206.9px;width:1405px;height:34px;border:5px solid #fd7e27;box-sizing:border-box"></div>
<div style="left:1435px;top:637.2px;width:63px;height:31.6px;border:5px solid #fd7e27;box-sizing:border-box"></div>
</div>
</body></html>
